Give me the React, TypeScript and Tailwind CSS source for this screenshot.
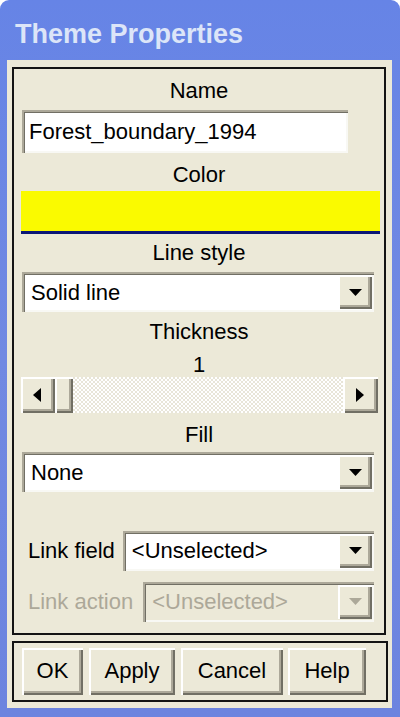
import React from "react";

const raised =
  "bg-[#ece9d8] shadow-[inset_2px_2px_0_#ffffff,inset_-2px_-2px_0_#716f64,inset_-4px_-4px_0_#aca899]";
const sunken =
  "shadow-[inset_2px_2px_0_#aca899,inset_3px_3px_0_#716f64,inset_-2px_-2px_0_#f8f8f4]";

function Tri({ dir, color = "#000" }: { dir: "down" | "left" | "right"; color?: string }) {
  if (dir === "down")
    return (
      <svg width="13" height="7" viewBox="0 0 13 7">
        <path d="M0 0H13L6.5 7Z" fill={color} />
      </svg>
    );
  if (dir === "left")
    return (
      <svg width="8" height="14" viewBox="0 0 8 14">
        <path d="M8 0V14L0 7Z" fill={color} />
      </svg>
    );
  return (
    <svg width="8" height="14" viewBox="0 0 8 14">
      <path d="M0 0V14L8 7Z" fill={color} />
    </svg>
  );
}

function Label({ children, className = "" }: { children: React.ReactNode; className?: string }) {
  return <div className={`h-[24px] leading-[24px] text-center ${className}`}>{children}</div>;
}

function Select({ value, disabled = false, className = "" }: { value: string; disabled?: boolean; className?: string }) {
  return (
    <div
      className={`flex h-[40px] items-center pl-[9px] pr-[2px] ${sunken} ${
        disabled ? "bg-[#ece9d8] text-[#aca899]" : "bg-white text-black"
      } ${className}`}
    >
      <span className="flex-1 whitespace-nowrap">{value}</span>
      <div className={`flex h-[34px] w-[34px] items-center justify-center ${raised}`}>
        <Tri dir="down" color={disabled ? "#aca899" : "#000"} />
      </div>
    </div>
  );
}

export default function App() {
  return (
    <div className="h-[717px] w-[400px] bg-white font-['Liberation_Sans',Arial,sans-serif] text-[22px] text-black">
      <div className="flex h-full flex-col rounded-t-[9px] bg-gradient-to-b from-[#6684e6] via-[#7189e2] to-[#6c84df] px-[7px] pb-[9px] pr-[8px]">
        {/* title bar */}
        <div className="flex h-[60px] shrink-0 items-center pl-[8px] pt-[8px] text-[27px] font-bold leading-[32px] text-[#dce5f8]">
          Theme Properties
        </div>

        {/* client area */}
        <div className="flex flex-1 flex-col bg-[#ece9d8] pl-[5px] pt-[7px]">
          {/* properties group */}
          <div className="flex h-[568px] w-[374px] flex-col border-2 border-[#141414]">
            <Label className="mt-[10px]">Name</Label>
            <div className={`ml-[8px] mt-[7px] flex h-[43px] w-[326px] items-center bg-white pl-[7px] ${sunken}`}>
              Forest_boundary_1994
            </div>

            <Label className="mt-[10px]">Color</Label>
            <div className="ml-[7px] mr-[4px] mt-[4px] h-[43px] border-b-[3px] border-[#0c1877] bg-[#fafa00]" />

            <Label className="mt-[7px]">Line style</Label>
            <Select value="Solid line" className="ml-[8px] mr-[10px] mt-[7px]" />

            <Label className="mt-[8px]">Thickness</Label>
            <Label className="mt-[9px]">1</Label>

            {/* scrollbar */}
            <div className="ml-[7px] mr-[6px] flex h-[36px] bg-[#f4f2ea] bg-[conic-gradient(#ffffff_25%,#e8e5d8_0_50%,#ffffff_0_75%,#e8e5d8_0)] bg-[length:4px_4px]">
              <div className={`flex w-[34px] items-center justify-center pr-[2px] ${raised}`}>
                <Tri dir="left" />
              </div>
              <div className={`w-[18px] ${raised}`} />
              <div className="flex-1" />
              <div className={`flex w-[35px] items-center justify-center pr-[2px] ${raised}`}>
                <Tri dir="right" />
              </div>
            </div>

            <Label className="mt-[10px]">Fill</Label>
            <Select value="None" className="ml-[8px] mr-[10px] mt-[5px]" />

            <div className="ml-[14px] mr-[10px] mt-[39px] flex h-[39px] items-center gap-[8px]">
              <span className="whitespace-nowrap">Link field</span>
              <Select value="<Unselected>" className="flex-1" />
            </div>
            <div className="ml-[14px] mr-[10px] mt-[12px] flex h-[39px] items-center gap-[10px]">
              <span className="whitespace-nowrap text-[#aca899]">Link action</span>
              <Select value="<Unselected>" disabled className="flex-1" />
            </div>
          </div>

          {/* buttons group */}
          <div className="mt-[6px] flex h-[61px] w-[376px] items-start border-2 border-[#141414] pl-[8px] pt-[5px]">
            <div className={`flex h-[47px] w-[61px] items-center justify-center pb-[2px] ${raised}`}>OK</div>
            <div className={`ml-[6px] flex h-[47px] w-[86px] items-center justify-center pb-[2px] ${raised}`}>Apply</div>
            <div className={`ml-[6px] flex h-[47px] w-[102px] items-center justify-center pb-[2px] ${raised}`}>Cancel</div>
            <div className={`ml-[5px] flex h-[47px] w-[78px] items-center justify-center pb-[2px] ${raised}`}>Help</div>
          </div>
        </div>
      </div>
    </div>
  );
}
